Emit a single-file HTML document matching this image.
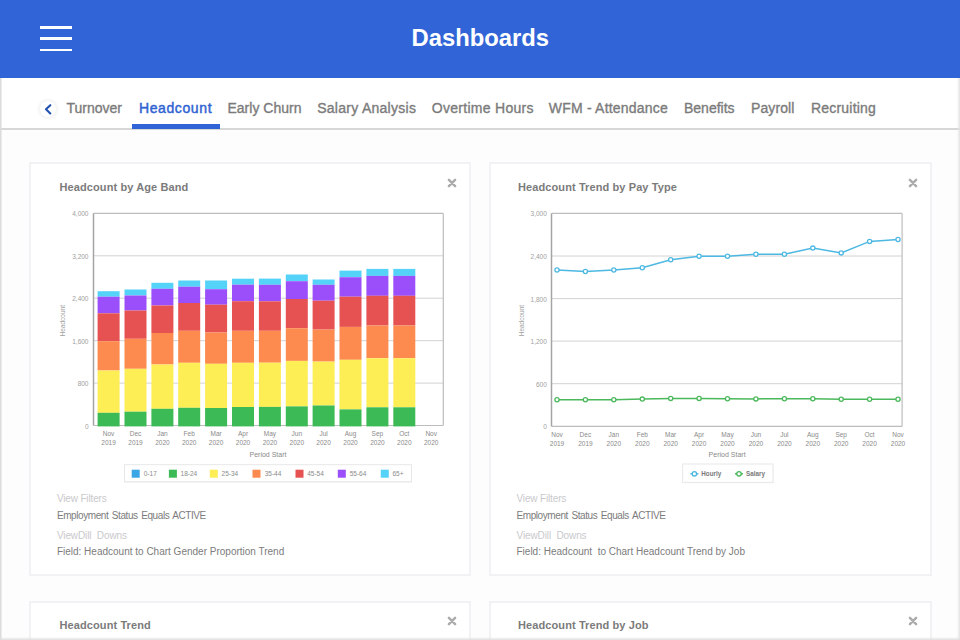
<!DOCTYPE html>
<html><head><meta charset="utf-8">
<style>
html,body{margin:0;padding:0;}
body{width:960px;height:640px;overflow:hidden;position:relative;background:#fdfdfd;font-family:"Liberation Sans",sans-serif;}
.hdr{position:absolute;left:0;top:0;width:960px;height:78px;background:#3165d7;}
.hb{position:absolute;left:40px;width:32px;height:3px;background:#fff;}
.title{position:absolute;left:411.5px;top:23px;font-size:23.8px;font-weight:700;color:#fff;line-height:30px;white-space:nowrap;}
.tabbar{position:absolute;left:0;top:78px;width:960px;height:50px;background:#fff;border-bottom:2px solid #d7d7d7;}
.tab{position:absolute;top:98.3px;font-size:14px;line-height:20px;color:#7b7b7b;white-space:nowrap;-webkit-text-stroke:0.35px #7b7b7b;}
.tab.act{color:#2f63d2;-webkit-text-stroke:0.45px #2f63d2;}
.uline{position:absolute;left:132px;top:124.2px;width:88px;height:4.9px;background:#3165d7;}
.chev{position:absolute;left:40px;top:100.5px;width:16px;height:16px;border-radius:50%;background:#fff;box-shadow:0 0 4px rgba(0,0,0,0.13);}
.edge{position:absolute;top:78px;width:2px;height:562px;background:#e6e6e8;}
.card{position:absolute;background:#fff;border:2px solid #f2f2f4;box-sizing:border-box;}
.ctitle{position:absolute;font-size:11px;font-weight:700;color:#7b7b7b;white-space:nowrap;line-height:14px;letter-spacing:0.1px;}
.xi{position:absolute;}
.ft{position:absolute;font-size:10px;line-height:12px;white-space:nowrap;}
.ft.l{color:#c9c9cc;}
.ft.d{color:#7c7c7c;}
svg.ch{position:absolute;left:0;top:0;}
.ax{font-family:"Liberation Sans",sans-serif;font-size:6.5px;fill:#8a8a8a;}
.axs{font-family:"Liberation Sans",sans-serif;font-size:7px;fill:#8a8a8a;}
.yl{font-family:"Liberation Sans",sans-serif;font-size:6.5px;fill:#a0a0a0;}
.lg{font-family:"Liberation Sans",sans-serif;font-size:6.3px;font-weight:700;fill:#777;}
</style></head><body>
<div class="hdr"></div>
<div class="hb" style="top:26px"></div>
<div class="hb" style="top:37px"></div>
<div class="hb" style="top:48.7px;height:2.7px"></div>
<div class="title">Dashboards</div>
<div class="tabbar"></div>
<div class="chev"></div>
<svg style="position:absolute;left:39px;top:99.5px" width="18" height="18" viewBox="0 0 18 18"><path d="M11.3 5.2 L7 9.2 L11.3 13.4" fill="none" stroke="#2150b0" stroke-width="2.1" stroke-linecap="round" stroke-linejoin="round"/></svg>
<div class="tab" style="left:66.5px;letter-spacing:0px">Turnover</div>
<div class="tab act" style="left:139px;letter-spacing:0.6px">Headcount</div>
<div class="tab" style="left:227.5px;letter-spacing:0px">Early Churn</div>
<div class="tab" style="left:317.2px;letter-spacing:0.27px">Salary Analysis</div>
<div class="tab" style="left:431.8px;letter-spacing:0.28px">Overtime Hours</div>
<div class="tab" style="left:548.8px;letter-spacing:0.2px">WFM - Attendance</div>
<div class="tab" style="left:684px;letter-spacing:0px">Benefits</div>
<div class="tab" style="left:751px;letter-spacing:0.1px">Payroll</div>
<div class="tab" style="left:811px;letter-spacing:0.2px">Recruiting</div>
<div class="uline"></div>
<div class="edge" style="left:0;background:linear-gradient(90deg,#dcdcde,#dcdcde 55%,rgba(220,220,222,0))"></div>
<div class="edge" style="left:957px;width:3px;background:linear-gradient(90deg,rgba(224,224,226,0),#e2e2e4)"></div>

<div class="card" style="left:29px;top:162px;width:442px;height:414px"></div>
<div class="card" style="left:489px;top:162px;width:443px;height:414px"></div>
<div class="card" style="left:29px;top:601px;width:442px;height:100px"></div>
<div class="card" style="left:489px;top:601px;width:443px;height:100px"></div>

<div class="ctitle" style="left:59.5px;top:179.5px">Headcount by Age Band</div>
<div class="ctitle" style="left:518px;top:179.5px">Headcount Trend by Pay Type</div>
<div class="ctitle" style="left:59.5px;top:618px">Headcount Trend</div>
<div class="ctitle" style="left:518px;top:618px">Headcount Trend by Job</div>
<svg class="xi" style="left:446px;top:177px" width="12" height="12" viewBox="0 0 12 12"><path d="M2.9 2.9 L9.1 9.1 M9.1 2.9 L2.9 9.1" stroke="#acacac" stroke-width="2.5" stroke-linecap="round"/></svg>
<svg class="xi" style="left:906.9px;top:177px" width="12" height="12" viewBox="0 0 12 12"><path d="M2.9 2.9 L9.1 9.1 M9.1 2.9 L2.9 9.1" stroke="#acacac" stroke-width="2.5" stroke-linecap="round"/></svg>
<svg class="xi" style="left:446px;top:615.3px" width="12" height="12" viewBox="0 0 12 12"><path d="M2.9 2.9 L9.1 9.1 M9.1 2.9 L2.9 9.1" stroke="#acacac" stroke-width="2.5" stroke-linecap="round"/></svg>
<svg class="xi" style="left:906.9px;top:615.3px" width="12" height="12" viewBox="0 0 12 12"><path d="M2.9 2.9 L9.1 9.1 M9.1 2.9 L2.9 9.1" stroke="#acacac" stroke-width="2.5" stroke-linecap="round"/></svg>

<svg class="ch" width="960" height="640" viewBox="0 0 960 640">
<line x1="93.5" y1="255.8" x2="443.3" y2="255.8" stroke="#d2d2d2" stroke-width="1"/>
<line x1="93.5" y1="298.2" x2="443.3" y2="298.2" stroke="#d2d2d2" stroke-width="1"/>
<line x1="93.5" y1="340.7" x2="443.3" y2="340.7" stroke="#d2d2d2" stroke-width="1"/>
<line x1="93.5" y1="383.1" x2="443.3" y2="383.1" stroke="#d2d2d2" stroke-width="1"/>
<line x1="93.5" y1="213.4" x2="443.3" y2="213.4" stroke="#bdbdbd" stroke-width="1.2"/>
<line x1="443.3" y1="213.4" x2="443.3" y2="425.5" stroke="#bdbdbd" stroke-width="1.2"/>
<text x="88.5" y="216.4" text-anchor="end" class="yl">4,000</text>
<text x="88.5" y="258.8" text-anchor="end" class="yl">3,200</text>
<text x="88.5" y="301.2" text-anchor="end" class="yl">2,400</text>
<text x="88.5" y="343.7" text-anchor="end" class="yl">1,600</text>
<text x="88.5" y="386.1" text-anchor="end" class="yl">800</text>
<text x="88.5" y="428.5" text-anchor="end" class="yl">0</text>
<line x1="93.5" y1="425.5" x2="443.3" y2="425.5" stroke="#bdbdbd" stroke-width="1.2"/>
<rect x="97.6" y="291.2" width="22" height="5.5" fill="#55d2f7"/>
<rect x="97.6" y="296.7" width="22" height="16.6" fill="#9b4ffb"/>
<rect x="97.6" y="313.3" width="22" height="27.9" fill="#e65252"/>
<rect x="97.6" y="341.2" width="22" height="29.3" fill="#fd8a4e"/>
<rect x="97.6" y="370.5" width="22" height="42.3" fill="#fdee56"/>
<rect x="97.6" y="412.8" width="22" height="13.6" fill="#3cba55"/>
<rect x="124.5" y="289.5" width="22" height="6.0" fill="#55d2f7"/>
<rect x="124.5" y="295.5" width="22" height="15.0" fill="#9b4ffb"/>
<rect x="124.5" y="310.5" width="22" height="28.3" fill="#e65252"/>
<rect x="124.5" y="338.8" width="22" height="30.0" fill="#fd8a4e"/>
<rect x="124.5" y="368.8" width="22" height="42.9" fill="#fdee56"/>
<rect x="124.5" y="411.7" width="22" height="14.7" fill="#3cba55"/>
<rect x="151.4" y="282.8" width="22" height="6.0" fill="#55d2f7"/>
<rect x="151.4" y="288.8" width="22" height="16.7" fill="#9b4ffb"/>
<rect x="151.4" y="305.5" width="22" height="27.5" fill="#e65252"/>
<rect x="151.4" y="333.0" width="22" height="31.5" fill="#fd8a4e"/>
<rect x="151.4" y="364.5" width="22" height="44.3" fill="#fdee56"/>
<rect x="151.4" y="408.8" width="22" height="17.6" fill="#3cba55"/>
<rect x="178.2" y="280.5" width="22" height="6.2" fill="#55d2f7"/>
<rect x="178.2" y="286.7" width="22" height="16.3" fill="#9b4ffb"/>
<rect x="178.2" y="303.0" width="22" height="27.8" fill="#e65252"/>
<rect x="178.2" y="330.8" width="22" height="32.0" fill="#fd8a4e"/>
<rect x="178.2" y="362.8" width="22" height="45.0" fill="#fdee56"/>
<rect x="178.2" y="407.8" width="22" height="18.6" fill="#3cba55"/>
<rect x="205.1" y="280.5" width="22" height="8.7" fill="#55d2f7"/>
<rect x="205.1" y="289.2" width="22" height="15.5" fill="#9b4ffb"/>
<rect x="205.1" y="304.7" width="22" height="27.8" fill="#e65252"/>
<rect x="205.1" y="332.5" width="22" height="31.3" fill="#fd8a4e"/>
<rect x="205.1" y="363.8" width="22" height="44.2" fill="#fdee56"/>
<rect x="205.1" y="408.0" width="22" height="18.4" fill="#3cba55"/>
<rect x="232.0" y="278.7" width="22" height="6.0" fill="#55d2f7"/>
<rect x="232.0" y="284.7" width="22" height="16.5" fill="#9b4ffb"/>
<rect x="232.0" y="301.2" width="22" height="29.6" fill="#e65252"/>
<rect x="232.0" y="330.8" width="22" height="32.0" fill="#fd8a4e"/>
<rect x="232.0" y="362.8" width="22" height="44.2" fill="#fdee56"/>
<rect x="232.0" y="407.0" width="22" height="19.4" fill="#3cba55"/>
<rect x="258.9" y="278.6" width="22" height="6.2" fill="#55d2f7"/>
<rect x="258.9" y="284.8" width="22" height="16.5" fill="#9b4ffb"/>
<rect x="258.9" y="301.3" width="22" height="29.5" fill="#e65252"/>
<rect x="258.9" y="330.8" width="22" height="31.9" fill="#fd8a4e"/>
<rect x="258.9" y="362.7" width="22" height="44.2" fill="#fdee56"/>
<rect x="258.9" y="406.9" width="22" height="19.5" fill="#3cba55"/>
<rect x="285.8" y="274.5" width="22" height="6.7" fill="#55d2f7"/>
<rect x="285.8" y="281.2" width="22" height="17.8" fill="#9b4ffb"/>
<rect x="285.8" y="299.0" width="22" height="29.2" fill="#e65252"/>
<rect x="285.8" y="328.2" width="22" height="32.7" fill="#fd8a4e"/>
<rect x="285.8" y="360.9" width="22" height="45.5" fill="#fdee56"/>
<rect x="285.8" y="406.4" width="22" height="20.0" fill="#3cba55"/>
<rect x="312.6" y="279.5" width="22" height="5.3" fill="#55d2f7"/>
<rect x="312.6" y="284.8" width="22" height="15.9" fill="#9b4ffb"/>
<rect x="312.6" y="300.7" width="22" height="28.9" fill="#e65252"/>
<rect x="312.6" y="329.6" width="22" height="32.0" fill="#fd8a4e"/>
<rect x="312.6" y="361.6" width="22" height="43.9" fill="#fdee56"/>
<rect x="312.6" y="405.5" width="22" height="20.9" fill="#3cba55"/>
<rect x="339.5" y="270.6" width="22" height="6.6" fill="#55d2f7"/>
<rect x="339.5" y="277.2" width="22" height="19.5" fill="#9b4ffb"/>
<rect x="339.5" y="296.7" width="22" height="30.2" fill="#e65252"/>
<rect x="339.5" y="326.9" width="22" height="32.9" fill="#fd8a4e"/>
<rect x="339.5" y="359.8" width="22" height="49.6" fill="#fdee56"/>
<rect x="339.5" y="409.4" width="22" height="17.0" fill="#3cba55"/>
<rect x="366.4" y="268.9" width="22" height="7.0" fill="#55d2f7"/>
<rect x="366.4" y="275.9" width="22" height="19.9" fill="#9b4ffb"/>
<rect x="366.4" y="295.8" width="22" height="29.7" fill="#e65252"/>
<rect x="366.4" y="325.5" width="22" height="32.7" fill="#fd8a4e"/>
<rect x="366.4" y="358.2" width="22" height="49.1" fill="#fdee56"/>
<rect x="366.4" y="407.3" width="22" height="19.1" fill="#3cba55"/>
<rect x="393.3" y="268.9" width="22" height="7.0" fill="#55d2f7"/>
<rect x="393.3" y="275.9" width="22" height="19.9" fill="#9b4ffb"/>
<rect x="393.3" y="295.8" width="22" height="29.7" fill="#e65252"/>
<rect x="393.3" y="325.5" width="22" height="32.7" fill="#fd8a4e"/>
<rect x="393.3" y="358.2" width="22" height="49.1" fill="#fdee56"/>
<rect x="393.3" y="407.3" width="22" height="19.1" fill="#3cba55"/>
<line x1="93.5" y1="213.4" x2="93.5" y2="425.5" stroke="#a4a4a4" stroke-width="1.5"/>
<text x="108.6" y="436.4" text-anchor="middle" class="ax">Nov</text>
<text x="108.6" y="445" text-anchor="middle" class="ax">2019</text>
<text x="135.5" y="436.4" text-anchor="middle" class="ax">Dec</text>
<text x="135.5" y="445" text-anchor="middle" class="ax">2019</text>
<text x="162.4" y="436.4" text-anchor="middle" class="ax">Jan</text>
<text x="162.4" y="445" text-anchor="middle" class="ax">2020</text>
<text x="189.2" y="436.4" text-anchor="middle" class="ax">Feb</text>
<text x="189.2" y="445" text-anchor="middle" class="ax">2020</text>
<text x="216.1" y="436.4" text-anchor="middle" class="ax">Mar</text>
<text x="216.1" y="445" text-anchor="middle" class="ax">2020</text>
<text x="243.0" y="436.4" text-anchor="middle" class="ax">Apr</text>
<text x="243.0" y="445" text-anchor="middle" class="ax">2020</text>
<text x="269.9" y="436.4" text-anchor="middle" class="ax">May</text>
<text x="269.9" y="445" text-anchor="middle" class="ax">2020</text>
<text x="296.8" y="436.4" text-anchor="middle" class="ax">Jun</text>
<text x="296.8" y="445" text-anchor="middle" class="ax">2020</text>
<text x="323.6" y="436.4" text-anchor="middle" class="ax">Jul</text>
<text x="323.6" y="445" text-anchor="middle" class="ax">2020</text>
<text x="350.5" y="436.4" text-anchor="middle" class="ax">Aug</text>
<text x="350.5" y="445" text-anchor="middle" class="ax">2020</text>
<text x="377.4" y="436.4" text-anchor="middle" class="ax">Sep</text>
<text x="377.4" y="445" text-anchor="middle" class="ax">2020</text>
<text x="404.3" y="436.4" text-anchor="middle" class="ax">Oct</text>
<text x="404.3" y="445" text-anchor="middle" class="ax">2020</text>
<text x="431.2" y="436.4" text-anchor="middle" class="ax">Nov</text>
<text x="431.2" y="445" text-anchor="middle" class="ax">2020</text>
<text x="268" y="456.8" text-anchor="middle" class="axs">Period Start</text>
<text transform="translate(65.2,320.7) rotate(-90)" text-anchor="middle" class="yl">Headcount</text>
<rect x="125" y="465.7" width="287" height="17" fill="#f2f2f2"/>
<rect x="124.5" y="464.7" width="287" height="17" fill="#fff" stroke="#e8e8e8" stroke-width="1"/>
<rect x="131.7" y="469.7" width="8" height="8" fill="#3aa6e6"/>
<text x="143.75" y="475.8" class="ax">0-17</text>
<rect x="168.9" y="469.7" width="8" height="8" fill="#3cba55"/>
<text x="180.6" y="475.8" class="ax">18-24</text>
<rect x="209.8" y="469.7" width="8" height="8" fill="#fdee56"/>
<text x="221.6" y="475.8" class="ax">25-34</text>
<rect x="252.5" y="469.7" width="8" height="8" fill="#fd8a4e"/>
<text x="264.7" y="475.8" class="ax">35-44</text>
<rect x="295.5" y="469.7" width="8" height="8" fill="#e65252"/>
<text x="307.2" y="475.8" class="ax">45-54</text>
<rect x="337.8" y="469.7" width="8" height="8" fill="#9b4ffb"/>
<text x="349.7" y="475.8" class="ax">55-64</text>
<rect x="380.8" y="469.7" width="8" height="8" fill="#55d2f7"/>
<text x="392.5" y="475.8" class="ax">65+</text>
<line x1="551.5" y1="256.0" x2="902.1" y2="256.0" stroke="#d2d2d2" stroke-width="1"/>
<line x1="551.5" y1="298.6" x2="902.1" y2="298.6" stroke="#d2d2d2" stroke-width="1"/>
<line x1="551.5" y1="341.1" x2="902.1" y2="341.1" stroke="#d2d2d2" stroke-width="1"/>
<line x1="551.5" y1="383.7" x2="902.1" y2="383.7" stroke="#d2d2d2" stroke-width="1"/>
<line x1="551.5" y1="213.4" x2="902.1" y2="213.4" stroke="#bdbdbd" stroke-width="1.2"/>
<line x1="902.1" y1="213.4" x2="902.1" y2="426.3" stroke="#bdbdbd" stroke-width="1.2"/>
<line x1="551.5" y1="426.3" x2="902.1" y2="426.3" stroke="#bdbdbd" stroke-width="1.2"/>
<line x1="551.5" y1="213.4" x2="551.5" y2="426.3" stroke="#a4a4a4" stroke-width="1.5"/>
<text x="546.8" y="216.4" text-anchor="end" class="yl">3,000</text>
<text x="546.8" y="259.0" text-anchor="end" class="yl">2,400</text>
<text x="546.8" y="301.6" text-anchor="end" class="yl">1,800</text>
<text x="546.8" y="344.1" text-anchor="end" class="yl">1,200</text>
<text x="546.8" y="386.7" text-anchor="end" class="yl">600</text>
<text x="546.8" y="429.3" text-anchor="end" class="yl">0</text>
<polyline points="557.0,270.0 585.4,271.5 613.8,270.0 642.3,267.8 670.7,259.7 699.1,256.3 727.5,256.2 755.9,254.3 784.4,254.3 812.8,248.1 841.2,252.9 869.6,241.4 898.0,239.5" fill="none" stroke="#4db8e2" stroke-width="1.5"/>
<circle cx="557.0" cy="270.0" r="2.1" fill="#fff" stroke="#4db8e2" stroke-width="1.3"/>
<circle cx="585.4" cy="271.5" r="2.1" fill="#fff" stroke="#4db8e2" stroke-width="1.3"/>
<circle cx="613.8" cy="270.0" r="2.1" fill="#fff" stroke="#4db8e2" stroke-width="1.3"/>
<circle cx="642.3" cy="267.8" r="2.1" fill="#fff" stroke="#4db8e2" stroke-width="1.3"/>
<circle cx="670.7" cy="259.7" r="2.1" fill="#fff" stroke="#4db8e2" stroke-width="1.3"/>
<circle cx="699.1" cy="256.3" r="2.1" fill="#fff" stroke="#4db8e2" stroke-width="1.3"/>
<circle cx="727.5" cy="256.2" r="2.1" fill="#fff" stroke="#4db8e2" stroke-width="1.3"/>
<circle cx="755.9" cy="254.3" r="2.1" fill="#fff" stroke="#4db8e2" stroke-width="1.3"/>
<circle cx="784.4" cy="254.3" r="2.1" fill="#fff" stroke="#4db8e2" stroke-width="1.3"/>
<circle cx="812.8" cy="248.1" r="2.1" fill="#fff" stroke="#4db8e2" stroke-width="1.3"/>
<circle cx="841.2" cy="252.9" r="2.1" fill="#fff" stroke="#4db8e2" stroke-width="1.3"/>
<circle cx="869.6" cy="241.4" r="2.1" fill="#fff" stroke="#4db8e2" stroke-width="1.3"/>
<circle cx="898.0" cy="239.5" r="2.1" fill="#fff" stroke="#4db8e2" stroke-width="1.3"/>
<polyline points="557.0,399.7 585.4,399.7 613.8,399.7 642.3,399.1 670.7,398.4 699.1,398.4 727.5,398.8 755.9,398.9 784.4,398.7 812.8,398.7 841.2,399.3 869.6,399.3 898.0,399.3" fill="none" stroke="#4bb85b" stroke-width="1.5"/>
<circle cx="557.0" cy="399.7" r="2.1" fill="#fff" stroke="#4bb85b" stroke-width="1.3"/>
<circle cx="585.4" cy="399.7" r="2.1" fill="#fff" stroke="#4bb85b" stroke-width="1.3"/>
<circle cx="613.8" cy="399.7" r="2.1" fill="#fff" stroke="#4bb85b" stroke-width="1.3"/>
<circle cx="642.3" cy="399.1" r="2.1" fill="#fff" stroke="#4bb85b" stroke-width="1.3"/>
<circle cx="670.7" cy="398.4" r="2.1" fill="#fff" stroke="#4bb85b" stroke-width="1.3"/>
<circle cx="699.1" cy="398.4" r="2.1" fill="#fff" stroke="#4bb85b" stroke-width="1.3"/>
<circle cx="727.5" cy="398.8" r="2.1" fill="#fff" stroke="#4bb85b" stroke-width="1.3"/>
<circle cx="755.9" cy="398.9" r="2.1" fill="#fff" stroke="#4bb85b" stroke-width="1.3"/>
<circle cx="784.4" cy="398.7" r="2.1" fill="#fff" stroke="#4bb85b" stroke-width="1.3"/>
<circle cx="812.8" cy="398.7" r="2.1" fill="#fff" stroke="#4bb85b" stroke-width="1.3"/>
<circle cx="841.2" cy="399.3" r="2.1" fill="#fff" stroke="#4bb85b" stroke-width="1.3"/>
<circle cx="869.6" cy="399.3" r="2.1" fill="#fff" stroke="#4bb85b" stroke-width="1.3"/>
<circle cx="898.0" cy="399.3" r="2.1" fill="#fff" stroke="#4bb85b" stroke-width="1.3"/>
<text x="557.0" y="437.1" text-anchor="middle" class="ax">Nov</text>
<text x="557.0" y="445.6" text-anchor="middle" class="ax">2019</text>
<text x="585.4" y="437.1" text-anchor="middle" class="ax">Dec</text>
<text x="585.4" y="445.6" text-anchor="middle" class="ax">2019</text>
<text x="613.8" y="437.1" text-anchor="middle" class="ax">Jan</text>
<text x="613.8" y="445.6" text-anchor="middle" class="ax">2020</text>
<text x="642.3" y="437.1" text-anchor="middle" class="ax">Feb</text>
<text x="642.3" y="445.6" text-anchor="middle" class="ax">2020</text>
<text x="670.7" y="437.1" text-anchor="middle" class="ax">Mar</text>
<text x="670.7" y="445.6" text-anchor="middle" class="ax">2020</text>
<text x="699.1" y="437.1" text-anchor="middle" class="ax">Apr</text>
<text x="699.1" y="445.6" text-anchor="middle" class="ax">2020</text>
<text x="727.5" y="437.1" text-anchor="middle" class="ax">May</text>
<text x="727.5" y="445.6" text-anchor="middle" class="ax">2020</text>
<text x="755.9" y="437.1" text-anchor="middle" class="ax">Jun</text>
<text x="755.9" y="445.6" text-anchor="middle" class="ax">2020</text>
<text x="784.4" y="437.1" text-anchor="middle" class="ax">Jul</text>
<text x="784.4" y="445.6" text-anchor="middle" class="ax">2020</text>
<text x="812.8" y="437.1" text-anchor="middle" class="ax">Aug</text>
<text x="812.8" y="445.6" text-anchor="middle" class="ax">2020</text>
<text x="841.2" y="437.1" text-anchor="middle" class="ax">Sep</text>
<text x="841.2" y="445.6" text-anchor="middle" class="ax">2020</text>
<text x="869.6" y="437.1" text-anchor="middle" class="ax">Oct</text>
<text x="869.6" y="445.6" text-anchor="middle" class="ax">2020</text>
<text x="898.0" y="437.1" text-anchor="middle" class="ax">Nov</text>
<text x="898.0" y="445.6" text-anchor="middle" class="ax">2020</text>
<text x="727.1" y="456.8" text-anchor="middle" class="axs">Period Start</text>
<text transform="translate(524.2,320.6) rotate(-90)" text-anchor="middle" class="yl">Headcount</text>
<rect x="683.1" y="465" width="90.4" height="18.3" fill="#f2f2f2"/>
<rect x="682.6" y="464" width="90.4" height="18.3" fill="#fff" stroke="#e8e8e8" stroke-width="1"/>
<line x1="690.4" y1="473.8" x2="698.4" y2="473.8" stroke="#4db8e2" stroke-width="1.5"/>
<circle cx="694.4" cy="473.8" r="2.2" fill="#fff" stroke="#4db8e2" stroke-width="1.3"/>
<text x="701.3" y="476" class="lg">Hourly</text>
<line x1="735" y1="473.8" x2="743" y2="473.8" stroke="#4bb85b" stroke-width="1.5"/>
<circle cx="739" cy="473.8" r="2.2" fill="#fff" stroke="#4bb85b" stroke-width="1.3"/>
<text x="746" y="476" class="lg">Salary</text>
</svg>

<div class="ft l" style="left:56.9px;top:492.5px;letter-spacing:-0.15px">View Filters</div>
<div class="ft d" style="left:56.9px;top:509.5px;letter-spacing:-0.42px;word-spacing:1.2px">Employment Status Equals ACTIVE</div>
<div class="ft l" style="left:56.9px;top:529.5px;letter-spacing:-0.1px">ViewDill&nbsp; Downs</div>
<div class="ft d" style="left:56.9px;top:545.5px">Field: Headcount to Chart Gender Proportion Trend</div>

<div class="ft l" style="left:516.5px;top:492.5px;letter-spacing:-0.15px">View Filters</div>
<div class="ft d" style="left:516.5px;top:509.5px;letter-spacing:-0.42px;word-spacing:1.2px">Employment Status Equals ACTIVE</div>
<div class="ft l" style="left:516.5px;top:529.5px;letter-spacing:-0.1px">ViewDill&nbsp; Downs</div>
<div class="ft d" style="left:516.5px;top:545.5px">Field: Headcount&nbsp; to Chart Headcount Trend by Job</div>
<div style="position:absolute;left:0;top:637px;width:960px;height:3px;background:linear-gradient(rgba(224,224,224,0),#dedede)"></div>
</body></html>
